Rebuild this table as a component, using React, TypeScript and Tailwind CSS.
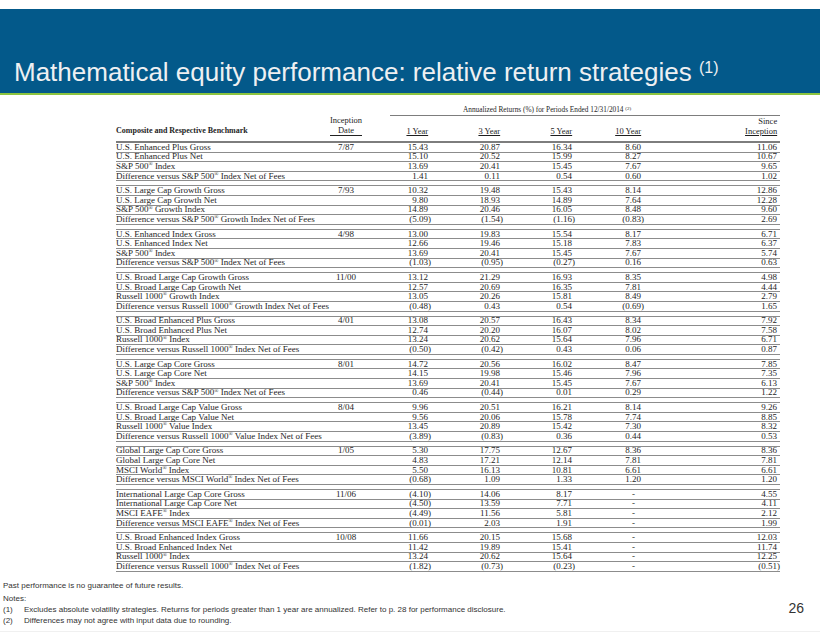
import React from "react";

// ============================================
// TYPES
// ============================================

interface DataRowItem {
  label: string;
  values: string[];
}

interface Group {
  date: string;
  rows: DataRowItem[];
}

// ============================================
// DATA
// ============================================

const groups: Group[] = [
  {
    date: "7/87",
    rows: [
      { label: "U.S. Enhanced Plus Gross", values: ["15.43", "20.87", "16.34", "8.60", "11.06"] },
      { label: "U.S. Enhanced Plus Net", values: ["15.10", "20.52", "15.99", "8.27", "10.67"] },
      { label: "S&P 500® Index", values: ["13.69", "20.41", "15.45", "7.67", "9.65"] },
      { label: "Difference versus S&P 500® Index Net of Fees", values: ["1.41", "0.11", "0.54", "0.60", "1.02"] },
    ],
  },
  {
    date: "7/93",
    rows: [
      { label: "U.S. Large Cap Growth Gross", values: ["10.32", "19.48", "15.43", "8.14", "12.86"] },
      { label: "U.S. Large Cap Growth Net", values: ["9.80", "18.93", "14.89", "7.64", "12.28"] },
      { label: "S&P 500® Growth Index", values: ["14.89", "20.46", "16.05", "8.48", "9.60"] },
      { label: "Difference versus S&P 500® Growth Index Net of Fees", values: ["(5.09)", "(1.54)", "(1.16)", "(0.83)", "2.69"] },
    ],
  },
  {
    date: "4/98",
    rows: [
      { label: "U.S. Enhanced Index Gross", values: ["13.00", "19.83", "15.54", "8.17", "6.71"] },
      { label: "U.S. Enhanced Index Net", values: ["12.66", "19.46", "15.18", "7.83", "6.37"] },
      { label: "S&P 500® Index", values: ["13.69", "20.41", "15.45", "7.67", "5.74"] },
      { label: "Difference versus S&P 500® Index Net of Fees", values: ["(1.03)", "(0.95)", "(0.27)", "0.16", "0.63"] },
    ],
  },
  {
    date: "11/00",
    rows: [
      { label: "U.S. Broad Large Cap Growth Gross", values: ["13.12", "21.29", "16.93", "8.35", "4.98"] },
      { label: "U.S. Broad Large Cap Growth Net", values: ["12.57", "20.69", "16.35", "7.81", "4.44"] },
      { label: "Russell 1000® Growth Index", values: ["13.05", "20.26", "15.81", "8.49", "2.79"] },
      { label: "Difference versus Russell 1000® Growth Index Net of Fees", values: ["(0.48)", "0.43", "0.54", "(0.69)", "1.65"] },
    ],
  },
  {
    date: "4/01",
    rows: [
      { label: "U.S. Broad Enhanced Plus Gross", values: ["13.08", "20.57", "16.43", "8.34", "7.92"] },
      { label: "U.S. Broad Enhanced Plus Net", values: ["12.74", "20.20", "16.07", "8.02", "7.58"] },
      { label: "Russell 1000® Index", values: ["13.24", "20.62", "15.64", "7.96", "6.71"] },
      { label: "Difference versus Russell 1000® Index Net of Fees", values: ["(0.50)", "(0.42)", "0.43", "0.06", "0.87"] },
    ],
  },
  {
    date: "8/01",
    rows: [
      { label: "U.S. Large Cap Core Gross", values: ["14.72", "20.56", "16.02", "8.47", "7.85"] },
      { label: "U.S. Large Cap Core Net", values: ["14.15", "19.98", "15.46", "7.96", "7.35"] },
      { label: "S&P 500® Index", values: ["13.69", "20.41", "15.45", "7.67", "6.13"] },
      { label: "Difference versus S&P 500® Index Net of Fees", values: ["0.46", "(0.44)", "0.01", "0.29", "1.22"] },
    ],
  },
  {
    date: "8/04",
    rows: [
      { label: "U.S. Broad Large Cap Value Gross", values: ["9.96", "20.51", "16.21", "8.14", "9.26"] },
      { label: "U.S. Broad Large Cap Value Net", values: ["9.56", "20.06", "15.78", "7.74", "8.85"] },
      { label: "Russell 1000® Value Index", values: ["13.45", "20.89", "15.42", "7.30", "8.32"] },
      { label: "Difference versus Russell 1000® Value Index Net of Fees", values: ["(3.89)", "(0.83)", "0.36", "0.44", "0.53"] },
    ],
  },
  {
    date: "1/05",
    rows: [
      { label: "Global Large Cap Core Gross", values: ["5.30", "17.75", "12.67", "8.36", "8.36"] },
      { label: "Global Large Cap Core Net", values: ["4.83", "17.21", "12.14", "7.81", "7.81"] },
      { label: "MSCI World® Index", values: ["5.50", "16.13", "10.81", "6.61", "6.61"] },
      { label: "Difference versus MSCI World® Index Net of Fees", values: ["(0.68)", "1.09", "1.33", "1.20", "1.20"] },
    ],
  },
  {
    date: "11/06",
    rows: [
      { label: "International Large Cap Core Gross", values: ["(4.10)", "14.06", "8.17", "-", "4.55"] },
      { label: "International Large Cap Core Net", values: ["(4.50)", "13.59", "7.71", "-", "4.11"] },
      { label: "MSCI EAFE® Index", values: ["(4.49)", "11.56", "5.81", "-", "2.12"] },
      { label: "Difference versus MSCI EAFE® Index Net of Fees", values: ["(0.01)", "2.03", "1.91", "-", "1.99"] },
    ],
  },
  {
    date: "10/08",
    rows: [
      { label: "U.S. Broad Enhanced Index Gross", values: ["11.66", "20.15", "15.68", "-", "12.03"] },
      { label: "U.S. Broad Enhanced Index Net", values: ["11.42", "19.89", "15.41", "-", "11.74"] },
      { label: "Russell 1000® Index", values: ["13.24", "20.62", "15.64", "-", "12.25"] },
      { label: "Difference versus Russell 1000® Index Net of Fees", values: ["(1.82)", "(0.73)", "(0.23)", "-", "(0.51)"] },
    ],
  },
];

// widths of the five return columns (1Y, 3Y, 5Y, 10Y, Since Inception)
const colWidths = ["w-[41px]", "w-[72px]", "w-[72px]", "w-[69px]", "w-[136px]"];

const headers = [
  { top: "", bottom: "1 Year" },
  { top: "", bottom: "3 Year" },
  { top: "", bottom: "5 Year" },
  { top: "", bottom: "10 Year" },
  { top: "Since", bottom: "Inception" },
];

// ============================================
// SUB-COMPONENTS
// ============================================

// Label with the ® mark set as superscript
function Label({ text }: { text: string }) {
  const parts = text.split("®");
  return (
    <>
      {parts.map((part, i) => (
        <React.Fragment key={i}>
          {part}
          {i < parts.length - 1 && <sup className="text-[5.5px]">®</sup>}
        </React.Fragment>
      ))}
    </>
  );
}

// Accounting style number: positives keep room for the closing paren
function Num({ value }: { value: string }) {
  if (value === "-") return <span className="mr-[9px]">-</span>;
  if (value.startsWith("(")) return <span>{value}</span>;
  return (
    <span>
      {value}
      <span className="invisible">)</span>
    </span>
  );
}

function TableHeader() {
  return (
    <div className="mt-[10px] flex border-b-2 border-[#7d7d7d] pb-[5px] text-[8.5px]">
      <div className="w-[200px] self-end text-[8px] font-bold leading-[10px]">Composite and Respective Benchmark</div>
      <div className="flex w-[60px] justify-center self-end leading-[10px]">
        <div className="text-center">
          <div>Inception</div>
          <div className="border-b border-[#222]">Date</div>
        </div>
      </div>
      <div className="w-[14px]" />
      <div className="flex w-[390px] flex-col leading-[10px]">
        <div className="h-[11px] border-b border-[#7d7d7d] pl-[73px] text-[7.3px]">
          Annualized Returns (%) for Periods Ended 12/31/2014 <sup className="text-[5px]">(2)</sup>
        </div>
        <div className="flex">
          {headers.map((h, i) => (
            <div key={i} className={`${colWidths[i]} text-right`}>
              <div className="h-[10px]">
                {h.top}
                <span className="invisible">)</span>
              </div>
              <div>
                <span className="underline">{h.bottom}</span>
                <span className="invisible">)</span>
              </div>
            </div>
          ))}
        </div>
      </div>
    </div>
  );
}

function GroupBlock({ group, first }: { group: Group; first: boolean }) {
  return (
    <div className={first ? "" : "mt-[4px] border-t border-[#8c8c8c]"}>
      {group.rows.map((row, idx) => (
        <div key={idx} className="flex h-[9.6px] items-center border-b border-[#8c8c8c] leading-none">
          <div className="w-[200px] whitespace-nowrap">
            <Label text={row.label} />
          </div>
          <div className="w-[60px] text-center">{idx === 0 ? group.date : ""}</div>
          <div className="w-[14px]" />
          {row.values.map((v, i) => (
            <div key={i} className={`${colWidths[i]} text-right`}>
              <Num value={v} />
            </div>
          ))}
        </div>
      ))}
    </div>
  );
}

// ============================================
// MAIN COMPONENT
// ============================================

export default function App() {
  return (
    <div className="flex h-[635px] w-[820px] flex-col overflow-hidden bg-white">
      {/* Title band */}
      <div className="mt-[9px] flex h-[84px] items-end bg-[#03598a] pb-[6px] pl-[14px]">
        <h1
          className="whitespace-nowrap text-[26px] leading-[30px] text-[#eef0f2]"
          style={{ fontFamily: '"Liberation Sans", Arial, sans-serif' }}
        >
          Mathematical equity performance: relative return strategies{" "}
          <sup className="text-[16px]">(1)</sup>
        </h1>
      </div>
      <div className="h-[2px] bg-[#8cc43f]" />

      {/* Performance table */}
      <div
        className="ml-[116px] w-[664px] text-[9px] text-[#1e1e1e]"
        style={{ fontFamily: '"Liberation Serif", "Times New Roman", serif' }}
      >
        <TableHeader />
        {groups.map((g, i) => (
          <GroupBlock key={i} group={g} first={i === 0} />
        ))}
      </div>

      {/* Footer notes + page number */}
      <div
        className="mt-[8px] flex justify-between text-[#333]"
        style={{ fontFamily: '"Liberation Sans", Arial, sans-serif' }}
      >
        <div className="pl-[3px] text-[8px] leading-[11px]">
          <div>Past performance is no guarantee of future results.</div>
          <div className="mt-[2px]">Notes:</div>
          <div className="flex">
            <span className="w-[21px]">(1)</span>
            <span>
              Excludes absolute volatility strategies. Returns for periods greater than 1 year are annualized. Refer to
              p. 28 for performance disclosure.
            </span>
          </div>
          <div className="flex">
            <span className="w-[21px]">(2)</span>
            <span>Differences may not agree with input data due to rounding.</span>
          </div>
        </div>
        <div className="self-center pr-[16px] pt-[12px] text-[14px]">26</div>
      </div>
      <div className="mt-auto mb-[3px] h-px bg-[#f0f0f0]" />
    </div>
  );
}
